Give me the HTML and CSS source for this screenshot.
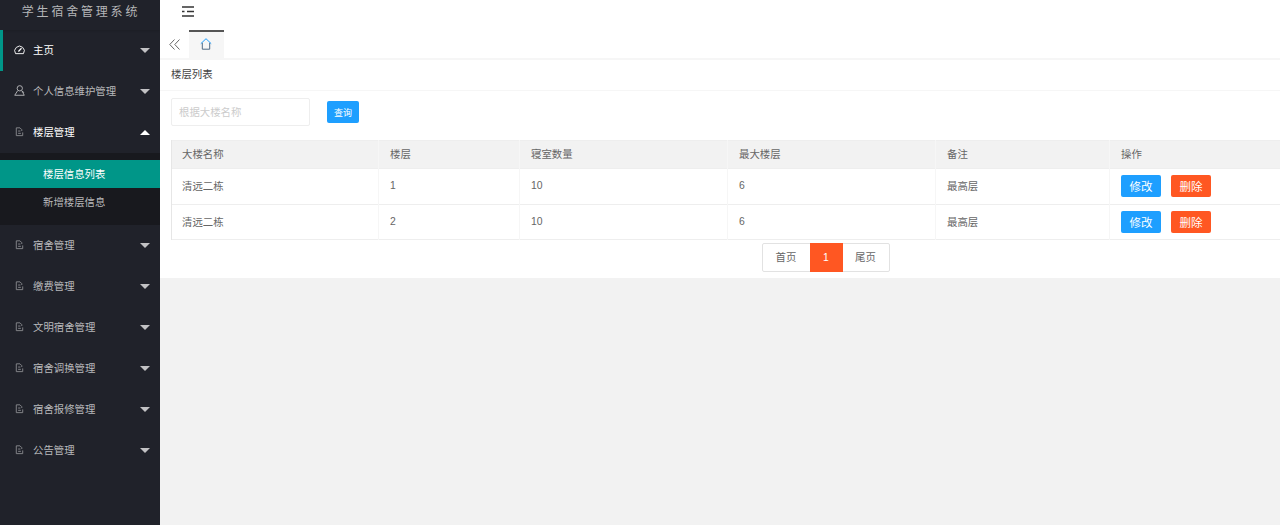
FILE: index.html
```html
<!DOCTYPE html>
<html lang="zh-CN">
<head>
<meta charset="utf-8">
<title>学生宿舍管理系统</title>
<link rel="stylesheet" href="styles.css">
</head>
<body>
<div class="app">
  <aside class="side">
    <div class="logo">学生宿舍管理系统</div>
    <ul class="nav">
      <li class="item home"><a><svg class="ic" viewBox="0 0 12 12"><path d="M1.700 10.500A5.200 5.200 0 1 1 10.300 10.500z" fill="none" stroke="currentColor"/><path d="M4.800 8.200 8.200 4.600" stroke="currentColor" stroke-width="1.300"/></svg><span>主页</span><i class="down"></i></a></li>
      <li class="item"><a><svg class="ic" viewBox="0 0 12 12"><circle cx="6.300" cy="3.600" r="2.900" fill="none" stroke="currentColor"/><path d="M4 6.200.8 11.200h10.400L8.600 6.200M8.600 7.500a1.200 1.200 0 0 1 2 1" fill="none" stroke="currentColor"/></svg><span>个人信息维护管理</span><i class="down"></i></a></li>
      <li class="item open"><a><svg class="ic doc" viewBox="0 0 12 12"><use href="#doc"/></svg><span>楼层管理</span><i class="up"></i></a>
        <ul class="sub">
          <li class="on">楼层信息列表</li>
          <li>新增楼层信息</li>
        </ul>
      </li>
      <li class="item"><a><svg class="ic doc" viewBox="0 0 12 12"><use href="#doc"/></svg><span>宿舍管理</span><i class="down"></i></a></li>
      <li class="item"><a><svg class="ic doc" viewBox="0 0 12 12"><use href="#doc"/></svg><span>缴费管理</span><i class="down"></i></a></li>
      <li class="item"><a><svg class="ic doc" viewBox="0 0 12 12"><use href="#doc"/></svg><span>文明宿舍管理</span><i class="down"></i></a></li>
      <li class="item"><a><svg class="ic doc" viewBox="0 0 12 12"><use href="#doc"/></svg><span>宿舍调换管理</span><i class="down"></i></a></li>
      <li class="item"><a><svg class="ic doc" viewBox="0 0 12 12"><use href="#doc"/></svg><span>宿舍报修管理</span><i class="down"></i></a></li>
      <li class="item"><a><svg class="ic doc" viewBox="0 0 12 12"><use href="#doc"/></svg><span>公告管理</span><i class="down"></i></a></li>
    </ul>
  </aside>
  <main class="main">
    <header class="top">
      <svg class="fold" viewBox="0 0 12 11"><path d="M0 1h12M0 5.500h2.500M5 5.500h7M0 10h12" stroke="currentColor" stroke-width="1.300" fill="none"/></svg>
    </header>
    <div class="tabs">
      <svg class="back" viewBox="0 0 11 11"><path d="M5.500.5.800 5.500l4.700 5M10.500.5 5.800 5.500l4.700 5" stroke="currentColor" fill="none"/></svg>
      <div class="tab"><svg class="house" viewBox="0 0 12 12"><path d="M.8 5.700 6 .7l5.200 5" stroke="#1E9FFF" fill="none"/><path d="M2.300 4.800v6.400h7.400V4.800" stroke="#4f6b85" fill="none"/></svg></div>
    </div>
    <section class="card">
      <div class="title">楼层列表</div>
      <form class="search">
        <input class="input" placeholder="根据大楼名称">
        <button class="query" type="button">查询</button>
      </form>
      <div class="table-wrap">
        <table class="grid">
          <colgroup><col class="c1"><col class="c2"><col class="c3"><col class="c4"><col class="c5"><col></colgroup>
          <thead><tr><th>大楼名称</th><th>楼层</th><th>寝室数量</th><th>最大楼层</th><th>备注</th><th class="ops">操作</th></tr></thead>
          <tbody>
            <tr><td>清远二栋</td><td>1</td><td>10</td><td>6</td><td>最高层</td><td class="ops"><button class="btn blue">修改</button><button class="btn red">删除</button></td></tr>
            <tr class="tail"><td>清远二栋</td><td>2</td><td>10</td><td>6</td><td>最高层</td><td class="ops"><button class="btn blue">修改</button><button class="btn red">删除</button></td></tr>
          </tbody>
        </table>
      </div>
      <div class="pager-row">
        <div class="pager"><a class="first">首页</a><a class="cur">1</a><a class="last">尾页</a></div>
      </div>
    </section>
  </main>
</div>
<svg class="defs" aria-hidden="true"><symbol id="doc" viewBox="0 0 12 12"><path d="M2.500 2h4l2 2v1.500M2.500 2v8.500h7V7M4.500 5.500h2.500M4.500 8h3" fill="none" stroke="currentColor"/></symbol></svg>
</body>
</html>
```
FILE: styles.css
```css
* { box-sizing: border-box; }
html, body { margin: 0; height: 100%; }
body { font-family: "Helvetica Neue", "Liberation Sans", "Noto Sans CJK SC", sans-serif; font-size: 10.4px; color: #666; background: #f2f2f2; overflow: hidden; }
ul { list-style: none; margin: 0; padding: 0; }
.defs { display: none; }
.app { display: flex; height: 525px; }
.side { width: 160px; flex: none; background: #20222a; color: #b8b9bb; }
.logo { height: 30px; padding-left: 2px; line-height: 24px; text-align: center; font-size: 12px; letter-spacing: 2.8px; color: #b5b6b8; box-shadow: 0 1px 2px rgba(0,0,0,.12); }
.item > a { display: flex; align-items: center; height: 41px; padding: 0 0 2px 14px; position: relative; }
.item > a > span { margin-left: 8px; }
.ic { width: 11px; height: 11px; flex: none; }
.ic.doc { color: #8a8b8f; }
.home > a { color: #fff; border-left: 3px solid #009688; padding-left: 11px; }
.open > a > span { color: #fff; }
.down, .up { position: absolute; right: 10px; top: 18px; width: 0; height: 0; border: 5px solid transparent; }
.down { border-top-color: #c2c2c4; border-bottom: 0; }
.up { border-bottom-color: #fff; border-top: 0; }
.sub { background: #18191e; padding: 7px 0 9px; }
.sub li { height: 28px; line-height: 30px; padding-left: 43px; }
.sub .on { background: #009688; color: #fff; }
.main { flex: 1; min-width: 0; display: flex; flex-direction: column; }
.top { height: 30px; background: #fff; flex: none; padding: 6px 0 0 22px; color: #333; }
.fold { display: block; width: 12px; height: 11px; }
.tabs { height: 30px; background: #fff; flex: none; display: flex; border-bottom: 2px solid #f6f6f6; color: #666; }
.back { width: 11px; height: 11px; margin: 9px 0 0 9px; }
.tab { width: 35px; height: 28px; margin-left: 9px; background: #f6f6f6; border-top: 2px solid #555; display: flex; justify-content: center; padding-top: 6px; }
.house { width: 12px; height: 12px; margin-left: -1px; }
.card { background: #fff; flex: none; height: 218px; }
.title { height: 31px; padding: 0 11px; line-height: 29px; color: #444; border-bottom: 1px solid #f6f6f6; }
.search { height: 49px; display: flex; padding: 7px 0 0 11px; align-items: flex-start; }
.input { width: 139px; height: 28px; padding: 0 7px; border: 1px solid #eee; border-radius: 2px; font: inherit; outline: 0; }
.input::placeholder { color: #ccc; }
.query { width: 32px; height: 22px; margin: 3px 0 0 17px; padding: 0; border: 0; border-radius: 2px; background: #1e9fff; color: #fff; font: inherit; font-size: 9px; }
.table-wrap { padding-left: 11px; }
.grid { width: 1109px; border-collapse: collapse; table-layout: fixed; }
.c1 { width: 207px; } .c2 { width: 141px; } .c3 { width: 208px; } .c4 { width: 208px; } .c5 { width: 174px; }
.grid th, .grid td { padding: 0 11px 2px; text-align: left; font-weight: 400; color: #666; border: 1px solid #f6f6f6; border-width: 0 1px 0 0; }
.grid th:first-child, .grid td:first-child { border-left: 1px solid #e6e6e6; padding-left: 10px; }
.grid tr { border-bottom: 1px solid #eee; }
.grid thead tr { border-top: 1px solid #eee; }
.grid th { height: 28px; background: #f2f2f2; }
.grid td { height: 36px; }
.grid .tail td { height: 35px; }
.grid .tail .ops { padding-bottom: 0; }
.grid .ops { border-left: 1px solid #e6e6e6; border-right: 0; }
.btn { width: 40px; height: 22px; padding: 0; margin-right: 10px; border: 0; border-radius: 2px; color: #fff; font: inherit; font-size: 11.5px; vertical-align: middle; }
.blue { background: #1e9fff; }
.red { background: #ff5722; }
.pager-row { display: flex; justify-content: center; padding: 3px 0 0 211px; }
.pager { display: flex; height: 29px; border: 1px solid #e2e2e2; border-radius: 2px; line-height: 27px; text-align: center; color: #666; }
.first { width: 47px; } .last { width: 46px; }
.cur { width: 33px; margin: -1px 0; height: 29px; line-height: 29px; background: #ff5722; color: #fff; }
```
